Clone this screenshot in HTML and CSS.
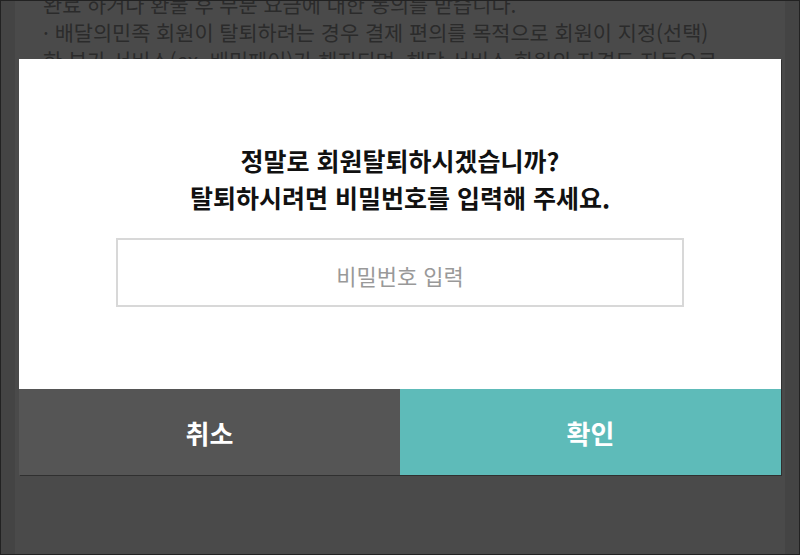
FILE: index.html
```html
<!DOCTYPE html>
<html lang="ko">
<head>
  <meta charset="UTF-8">
  <meta name="viewport" content="width=device-width, initial-scale=1.0">
  <title>회원탈퇴</title>
  <link rel="stylesheet" href="styles.css">
</head>
<body>
  <div class="screen">
    <div class="page">
      <p>완료 하거나 환불 후 부분 요금에 대한 동의를 받습니다.</p>
      <p>· 배달의민족 회원이 탈퇴하려는 경우 결제 편의를 목적으로 회원이 지정(선택)</p>
      <p>한 부가 서비스(ex. 배민페이)가 해지되며, 해당 서비스 회원의 자격도 자동으로</p>
      <p>상실됩니다.</p>
    </div>

    <div class="overlay"></div>

    <div class="dialog">
      <div class="dialog-body">
        <p class="dialog-title">정말로 회원탈퇴하시겠습니까?<br>탈퇴하시려면 비밀번호를 입력해 주세요.</p>
        <input type="password" class="password" placeholder="비밀번호 입력">
      </div>
      <div class="dialog-buttons">
        <button class="btn-cancel">취소</button>
        <button class="btn-ok">확인</button>
      </div>
    </div>
  </div>
</body>
</html>
```

FILE: styles.css
```css
* {
  box-sizing: border-box;
}

body {
  margin: 0;
  font-family: "Noto Sans CJK KR", "Noto Sans", sans-serif;
  background: #444;
}

.screen {
  position: relative;
  width: 800px;
  height: 555px;
  border: 1px solid #222;
  overflow: hidden;
  background: #ebebeb;
}

.page {
  margin: -11px 14px 0;
  height: calc(100% + 11px);
  padding: 0 28px;
  background: #fff;
  color: #959595;
  font-size: 20.8px;
  line-height: 28px;
  white-space: nowrap;
}

.page p {
  margin: 0;
}

.overlay {
  position: absolute;
  inset: 0;
  background: rgba(0, 0, 0, 0.71);
}

.dialog {
  position: absolute;
  left: 18px;
  top: 58px;
  width: 762px;
  box-shadow: 1px 1px 0 rgba(0, 0, 0, 0.35);
}

.dialog-body {
  background: #fff;
  height: 330px;
  padding-top: 83px;
  display: flex;
  flex-direction: column;
  align-items: center;
}

.dialog-title {
  margin: 0;
  font-size: 25px;
  font-weight: 700;
  line-height: 37px;
  color: #111;
  text-align: center;
}

.password {
  margin-top: 22px;
  width: 568px;
  height: 69px;
  padding-top: 6px;
  border: 2px solid #d8d8d8;
  font-family: inherit;
  font-size: 22px;
  text-align: center;
  outline: none;
}

.password::placeholder {
  color: #999;
}

.dialog-buttons {
  display: flex;
  height: 86px;
}

.dialog-buttons button {
  flex: 1;
  border: none;
  color: #fff;
  font-family: inherit;
  font-size: 26px;
  font-weight: 700;
  cursor: pointer;
}

.btn-cancel {
  background: #555;
}

.btn-ok {
  background: #5ebbb9;
}
```
